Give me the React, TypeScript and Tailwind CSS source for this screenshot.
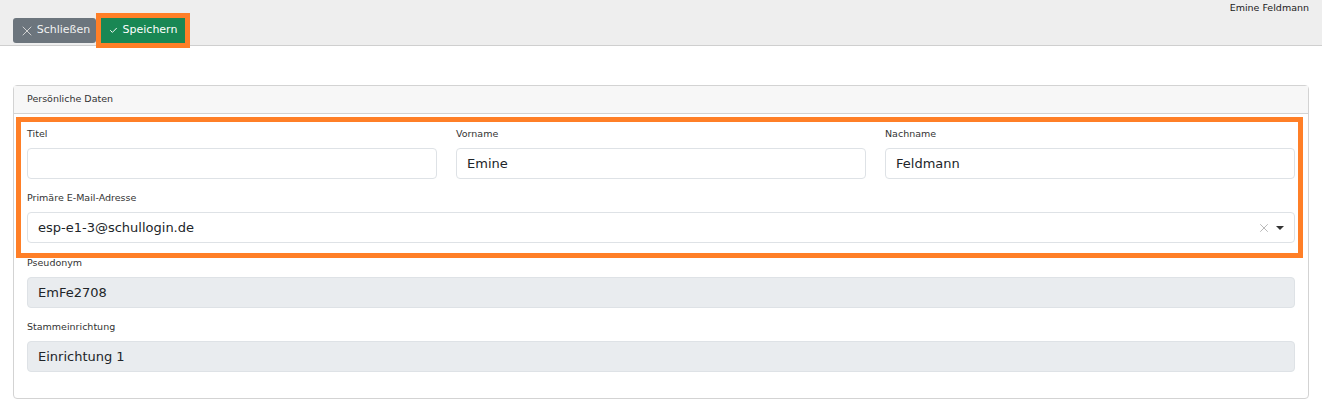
import { X, Check } from 'lucide-react';

const font = { fontFamily: '"DejaVu Sans", Verdana, sans-serif' };

function Label({ children }: { children: React.ReactNode }) {
  return <div className="h-[12px] text-[9.5px] leading-[12px] text-[#333]">{children}</div>;
}

function TextField({ label, value, readOnly }: { label: string; value?: string; readOnly?: boolean }) {
  return (
    <div className="flex flex-col gap-2">
      <Label>{label}</Label>
      <div
        className={`flex h-[31px] items-center rounded-[4px] border border-[#dee2e6] px-[10px] text-[13px] text-[#212529] ${
          readOnly ? 'bg-[#e9ecef]' : 'bg-white'
        }`}
      >
        {value}
      </div>
    </div>
  );
}

function SelectField({ label, value }: { label: string; value: string }) {
  return (
    <div className="flex flex-col gap-2">
      <Label>{label}</Label>
      <div className="flex h-[31px] items-center rounded-[4px] border border-[#dee2e6] bg-white pr-[10px] pl-[10px] text-[13px] text-[#212529]">
        <span className="flex-1">{value}</span>
        <X className="h-[14px] w-[14px] text-[#b5b5b5]" strokeWidth={1.6} />
        <span className="ml-[5px] h-0 w-0 border-x-[4px] border-t-[4px] border-x-transparent border-t-[#333]" />
      </div>
    </div>
  );
}

export default function App() {
  return (
    <div className="min-h-[409px] bg-white" style={font}>
      {/* Toolbar */}
      <div className="flex h-[46px] flex-col border-b border-[#cfcfcf] bg-[#eeeeee]">
        <div className="pt-[2px] pr-[13px] text-right text-[9.5px] leading-[12px] text-[#222]">Emine Feldmann</div>
        <div className="mt-[4px] flex gap-[5px] pl-[13px]">
          <button className="flex h-[25px] w-[83px] items-center justify-center gap-[2px] rounded-[3px] bg-[#6c757d] text-[11px] text-[#f2f2f2]">
            <X className="h-[16px] w-[16px] text-[#d8d8d8]" strokeWidth={1.4} />
            <span>Schließen</span>
          </button>
          <button className="flex h-[25px] w-[84px] items-center justify-center gap-[5px] bg-[#198754] text-[11px] text-white outline-[5px] outline-[#ff7f27] outline-solid">
            <Check className="h-[9px] w-[9px]" strokeWidth={2.5} />
            <span>Speichern</span>
          </button>
        </div>
      </div>

      {/* Personal data card */}
      <div className="mx-[13px] mt-[39px] rounded-[4px] border border-[#d3d3d3]">
        <div className="flex h-[28px] items-center border-b border-[#d3d3d3] bg-[#f7f7f7] px-[13px] text-[9.5px] text-[#333]">
          Persönliche Daten
        </div>
        <div className="flex flex-col gap-[13px] px-[13px] pt-[14px] pb-[26px]">
          <div className="relative mb-[1px] flex flex-col gap-[13px]">
            <span className="pointer-events-none absolute -top-[11px] -right-[8px] -bottom-[15px] -left-[11px] border-[5px] border-[#ff7f27]" />
            <div className="grid grid-cols-3 gap-x-[19px]">
              <TextField label="Titel" />
              <TextField label="Vorname" value="Emine" />
              <TextField label="Nachname" value="Feldmann" />
            </div>
            <SelectField label="Primäre E-Mail-Adresse" value="esp-e1-3@schullogin.de" />
          </div>
          <TextField label="Pseudonym" value="EmFe2708" readOnly />
          <TextField label="Stammeinrichtung" value="Einrichtung 1" readOnly />
        </div>
      </div>
    </div>
  );
}
